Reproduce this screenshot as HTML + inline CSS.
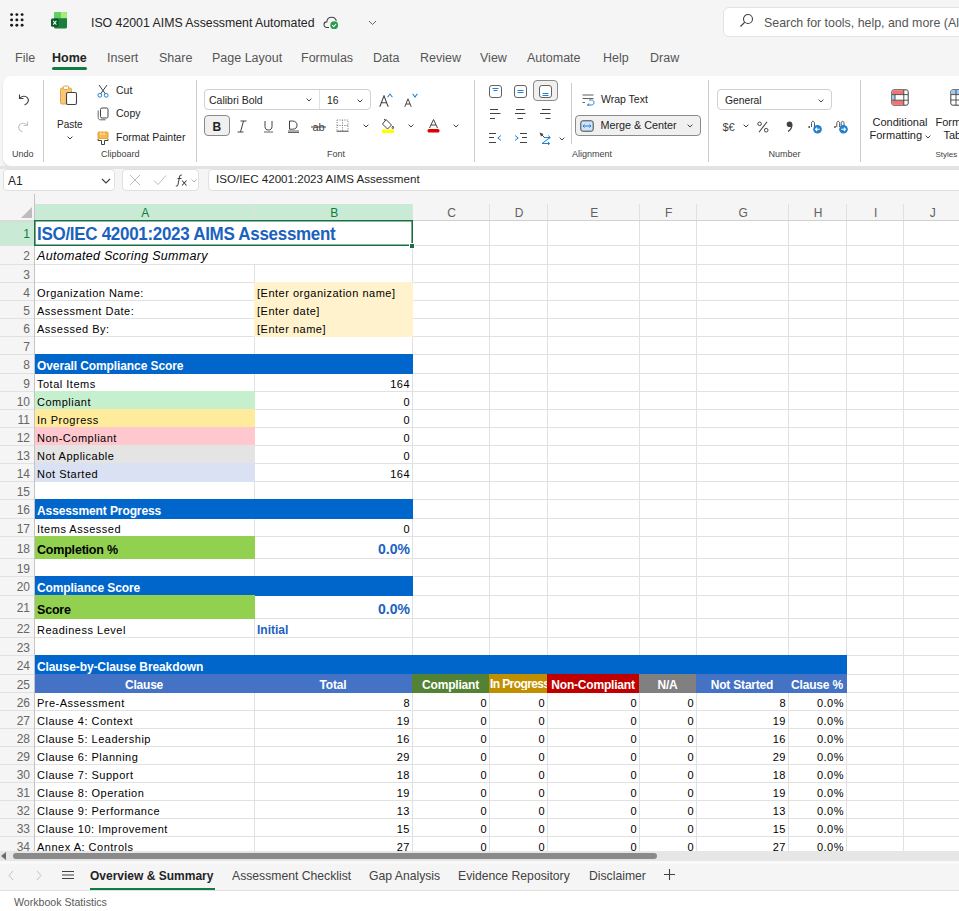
<!DOCTYPE html><html><head><meta charset="utf-8"><style>
*{box-sizing:border-box;margin:0;padding:0}
body{width:959px;height:911px;overflow:hidden;position:relative;background:#f5f5f5;font-family:"Liberation Sans",sans-serif;color:#242424}
.a{position:absolute;white-space:nowrap}
.tab{position:absolute;top:51px;font-size:12.5px;color:#555}
.c{position:absolute;white-space:nowrap;overflow:hidden;font-size:12px;color:#000;line-height:1}
.rh{position:absolute;left:0;width:33px;text-align:right;font-size:12px;color:#616161;padding-right:3px}
.ch{position:absolute;top:205px;height:16px;text-align:center;font-size:12px;color:#616161;line-height:16px;padding-left:2.4px}

</style></head><body>
<div class="a" style="left:0;top:0;width:959px;height:44px;background:#f5f5f5"></div>
<svg class="a" style="left:10.4px;top:13.2px" width="14" height="14" viewBox="0 0 14 14"><circle cx="1.60" cy="1.60" r="1.45" fill="#1a1a1a"/><circle cx="6.85" cy="1.60" r="1.45" fill="#1a1a1a"/><circle cx="12.10" cy="1.60" r="1.45" fill="#1a1a1a"/><circle cx="1.60" cy="6.90" r="1.45" fill="#1a1a1a"/><circle cx="6.85" cy="6.90" r="1.45" fill="#1a1a1a"/><circle cx="12.10" cy="6.90" r="1.45" fill="#1a1a1a"/><circle cx="1.60" cy="12.20" r="1.45" fill="#1a1a1a"/><circle cx="6.85" cy="12.20" r="1.45" fill="#1a1a1a"/><circle cx="12.10" cy="12.20" r="1.45" fill="#1a1a1a"/></svg>
<svg class="a" style="left:51px;top:12px" width="17" height="17" viewBox="0 0 17 17">
<rect x="3" y="0" width="13" height="16.6" rx="1.6" fill="#1b7f3a"/>
<path d="M4.6 0 H9.5 V6.3 H3 V1.6 A1.6 1.6 0 0 1 4.6 0 Z" fill="#62cf62"/>
<path d="M9.5 0 H14.4 A1.6 1.6 0 0 1 16 1.6 V6.3 H9.5 Z" fill="#a6ec7c"/>
<rect x="0" y="6.6" width="7.6" height="8.2" rx="1.3" fill="#0c5a2c"/>
<path d="M2.2 8.8 L5.4 12.6 M5.4 8.8 L2.2 12.6" stroke="#e8fff0" stroke-width="1.1"/>
</svg>
<div class="a" style="left:91px;top:15.5px;font-size:12.3px;color:#242424">ISO 42001 AIMS Assessment Automated</div>
<svg class="a" style="left:323px;top:14px" width="17" height="16" viewBox="0 0 17 16">
<path d="M6 13.5 H4 C2.2 13.5 1 12.3 1 10.7 C1 9.1 2.3 7.9 3.8 7.9 C4.1 5.2 6 3.3 8.6 3.3 C11.2 3.3 13.1 5.2 13.4 7.6" fill="none" stroke="#424242" stroke-width="1.05"/>
<circle cx="11.2" cy="11.2" r="4.6" fill="#fff"/>
<circle cx="11.2" cy="11.2" r="3.9" fill="#2a9d4a"/>
<path d="M9.3 11.2 L10.7 12.6 L13.1 10" fill="none" stroke="#fff" stroke-width="1.1"/>
</svg>
<svg class="a" style="left:368px;top:20px" width="9" height="6" viewBox="0 0 9 6"><path d="M1 1 L4.5 4.5 L8 1" fill="none" stroke="#616161" stroke-width="1"/></svg>
<div class="a" style="left:723px;top:7px;width:260px;height:30px;border-radius:6px;background:#fff;border:1px solid #e3e3e3"></div>
<svg class="a" style="left:739px;top:13px" width="15" height="15" viewBox="0 0 15 15"><circle cx="9" cy="6" r="4.5" fill="none" stroke="#424242" stroke-width="1.1"/><path d="M5.8 9.2 L1.5 13.5" stroke="#424242" stroke-width="1.2"/></svg>
<div class="a" style="left:764px;top:15.5px;font-size:12.4px;color:#555">Search for tools, help, and more (Alt + Q)</div>
<div class="tab" style="left:15px">File</div>
<div class="tab" style="left:52px;font-weight:bold;color:#242424;font-size:12.5px">Home</div>
<div class="tab" style="left:107px">Insert</div>
<div class="tab" style="left:159px">Share</div>
<div class="tab" style="left:212px">Page Layout</div>
<div class="tab" style="left:301px">Formulas</div>
<div class="tab" style="left:373px">Data</div>
<div class="tab" style="left:420px">Review</div>
<div class="tab" style="left:480px">View</div>
<div class="tab" style="left:527px">Automate</div>
<div class="tab" style="left:603px">Help</div>
<div class="tab" style="left:650px">Draw</div>
<div class="a" style="left:52px;top:67px;width:35px;height:3px;border-radius:2px;background:#107c41"></div>
<div class="a" style="left:3px;top:76px;width:1000px;height:90px;background:#fff;border-radius:8px;box-shadow:0 1px 2px rgba(0,0,0,0.14)"></div>
<svg class="a" style="left:17px;top:93px" width="13" height="13" viewBox="0 0 13 13"><path d="M2.5 1.5 V5.5 H6.5" fill="none" stroke="#424242" stroke-width="1.1"/><path d="M2.8 5.3 C4.5 3 8.5 2.5 10.5 4.8 C12.5 7.2 11 10.5 7.5 12" fill="none" stroke="#424242" stroke-width="1.1"/></svg>
<svg class="a" style="left:17px;top:120px" width="13" height="13" viewBox="0 0 13 13"><path d="M10.5 1.5 V5.5 H6.5" fill="none" stroke="#c4c4c4" stroke-width="1.1"/><path d="M10.2 5.3 C8.5 3 4.5 2.5 2.5 4.8 C0.5 7.2 2 10.5 5.5 12" fill="none" stroke="#c4c4c4" stroke-width="1.1"/></svg>
<div class="a" style="left:12px;top:150.38px;font-size:9px;line-height:1;color:#424242">Undo</div>
<div class="a" style="left:43px;top:80px;width:1px;height:82px;background:#cdcdcd"></div>
<svg class="a" style="left:59px;top:85px" width="20" height="21" viewBox="0 0 20 21"><rect x="1.5" y="3" width="11" height="16" rx="1.5" fill="#f8c77a" stroke="#e3a33f" stroke-width="1"/><rect x="4.5" y="1" width="5" height="3.5" rx="1" fill="#fff" stroke="#e3a33f" stroke-width="1"/><rect x="7.5" y="7.5" width="10" height="12" rx="1.5" fill="#fff" stroke="#424242" stroke-width="1.1"/></svg>
<div class="a" style="left:57px;top:119.53px;font-size:10px;line-height:1;color:#242424">Paste</div>
<svg class="a" style="left:66.5px;top:136px" width="6" height="4" viewBox="0 0 6 4"><path d="M0.6 0.6 L3 3 L5.4 0.6" fill="none" stroke="#424242" stroke-width="1"/></svg>
<svg class="a" style="left:97px;top:84px" width="12" height="14" viewBox="0 0 12 14"><path d="M2 1 L8.5 10 M10 1 L3.5 10" stroke="#424242" stroke-width="1"/><circle cx="2.8" cy="11.3" r="1.9" fill="none" stroke="#1f7fd0" stroke-width="1"/><circle cx="9.2" cy="11.3" r="1.9" fill="none" stroke="#1f7fd0" stroke-width="1"/></svg>
<div class="a" style="left:116px;top:85.11px;font-size:10.5px;line-height:1;color:#242424">Cut</div>
<svg class="a" style="left:97px;top:107px" width="12" height="14" viewBox="0 0 12 14"><rect x="3.5" y="1" width="7.5" height="10" rx="1.5" fill="#fff" stroke="#424242" stroke-width="1"/><path d="M1.2 3.5 V10.5 C1.2 12 2 12.8 3.5 12.8 H8.5" fill="none" stroke="#616161" stroke-width="1"/></svg>
<div class="a" style="left:116px;top:108.11px;font-size:10.5px;line-height:1;color:#242424">Copy</div>
<svg class="a" style="left:97px;top:131px" width="12" height="15" viewBox="0 0 12 15"><rect x="1" y="1" width="10" height="7" rx="1" fill="#f8b84e" stroke="#e09020" stroke-width="0.8"/><path d="M4 1.5 V4 M7 1.5 V4" stroke="#fff" stroke-width="0.9"/><path d="M1 8 V9.5 H4.5 V13.5 H7.5 V9.5 H11 V8" fill="#fff" stroke="#424242" stroke-width="1"/></svg>
<div class="a" style="left:116px;top:132.11px;font-size:10.5px;line-height:1;color:#242424">Format Painter</div>
<div class="a" style="left:101px;top:150.38px;font-size:9px;line-height:1;color:#424242">Clipboard</div>
<div class="a" style="left:196px;top:80px;width:1px;height:82px;background:#cdcdcd"></div>
<div class="a" style="left:204px;top:89px;width:167px;height:21px;border:1px solid #d1d1d1;border-radius:4px;background:#fff"></div>
<div class="a" style="left:319px;top:90px;width:1px;height:19px;background:#e0e0e0"></div>
<div class="a" style="left:209px;top:95.11px;font-size:10.5px;line-height:1;color:#242424">Calibri Bold</div>
<svg class="a" style="left:305.5px;top:98px" width="6" height="4" viewBox="0 0 6 4"><path d="M0.6 0.6 L3 3 L5.4 0.6" fill="none" stroke="#424242" stroke-width="1"/></svg>
<div class="a" style="left:327px;top:96.28px;font-size:10.3px;line-height:1;color:#242424">16</div>
<svg class="a" style="left:357px;top:98.5px" width="6" height="4" viewBox="0 0 6 4"><path d="M0.6 0.6 L3 3 L5.4 0.6" fill="none" stroke="#424242" stroke-width="1"/></svg>
<svg class="a" style="left:378.5px;top:95px" width="10" height="12" viewBox="0 0 10 12"><path d="M0.8 11.8 L5 0.8 L9.2 11.8 M2.4 7.8 H7.6" fill="none" stroke="#424242" stroke-width="1.05"/></svg>
<svg class="a" style="left:386.5px;top:93px" width="6" height="5" viewBox="0 0 6 5"><path d="M0.6 4.2 L3 1 L5.4 4.2" fill="none" stroke="#1f7fd0" stroke-width="1.05"/></svg>
<svg class="a" style="left:403.5px;top:98px" width="8" height="9" viewBox="0 0 8 9"><path d="M0.8 8.8 L4 0.8 L7.2 8.8 M2 6 H6" fill="none" stroke="#424242" stroke-width="1"/></svg>
<svg class="a" style="left:411.5px;top:93px" width="6" height="5" viewBox="0 0 6 5"><path d="M0.6 0.8 L3 4 L5.4 0.8" fill="none" stroke="#1f7fd0" stroke-width="1.05"/></svg>
<div class="a" style="left:204px;top:115px;width:26px;height:21px;border:1px solid #8a8a8a;border-radius:4px;background:#f0f0f0"></div>
<div class="a" style="left:212.5px;top:120.84px;font-size:12px;line-height:1;font-weight:bold;color:#242424">B</div>
<svg class="a" style="left:237px;top:120px" width="10" height="13" viewBox="0 0 10 13"><path d="M3.5 1 H9.5 M0.5 12 H6.5 M6.5 1 L3.5 12" fill="none" stroke="#424242" stroke-width="1"/></svg>
<svg class="a" style="left:264px;top:120px" width="9" height="13" viewBox="0 0 9 13"><path d="M1 1 V6.5 C1 9 2.5 10 4.5 10 C6.5 10 8 9 8 6.5 V1" fill="none" stroke="#424242" stroke-width="1"/><path d="M0 12 H9" stroke="#616161" stroke-width="1"/></svg>
<svg class="a" style="left:288px;top:120px" width="11" height="13" viewBox="0 0 11 13"><path d="M1.5 1 H4.5 C7.5 1 9 2.8 9 5.2 C9 7.8 7.5 9.2 4.5 9.2 H1.5 Z" fill="none" stroke="#424242" stroke-width="1"/><path d="M0 11 H11 M0 12.5 H11" stroke="#616161" stroke-width="1"/></svg>
<svg class="a" style="left:311px;top:119px" width="15" height="14" viewBox="0 0 15 14"><text x="7.5" y="12" font-size="11" font-family="Liberation Sans" fill="#424242" text-anchor="middle">ab</text><path d="M0 8 H15" stroke="#424242" stroke-width="1"/></svg>
<svg class="a" style="left:336px;top:119px" width="13" height="13" viewBox="0 0 13 13"><rect x="1" y="1" width="11" height="11" fill="none" stroke="#8a8a8a" stroke-width="1" stroke-dasharray="1.2 1.2"/><path d="M6.5 1 V12 M1 6.5 H12" stroke="#8a8a8a" stroke-width="1" stroke-dasharray="1.2 1.2"/><path d="M0.5 12.3 H12.5" stroke="#616161" stroke-width="1"/></svg>
<svg class="a" style="left:362.5px;top:124px" width="6" height="4" viewBox="0 0 6 4"><path d="M0.6 0.6 L3 3 L5.4 0.6" fill="none" stroke="#424242" stroke-width="1"/></svg>
<svg class="a" style="left:381px;top:118px" width="14" height="15" viewBox="0 0 14 15"><path d="M5 1.5 L10.5 7 L6.5 11 L1.5 6 Z" fill="none" stroke="#424242" stroke-width="1"/><path d="M3 1 L5 3" stroke="#424242" stroke-width="1"/><path d="M11.8 8 C12.8 9.5 12.8 10.5 11.8 10.8 C10.8 10.5 10.8 9.5 11.8 8Z" fill="none" stroke="#424242" stroke-width="0.9"/><rect x="1" y="11.5" width="12" height="3.5" fill="#ffff00"/></svg>
<svg class="a" style="left:407.5px;top:124px" width="6" height="4" viewBox="0 0 6 4"><path d="M0.6 0.6 L3 3 L5.4 0.6" fill="none" stroke="#424242" stroke-width="1"/></svg>
<svg class="a" style="left:427px;top:118px" width="13" height="15" viewBox="0 0 13 15"><path d="M2.5 10 L6.5 1.5 L10.5 10 M4 7 H9" fill="none" stroke="#424242" stroke-width="1"/><rect x="0.5" y="11" width="12" height="3.5" rx="1.5" fill="#e00000"/></svg>
<svg class="a" style="left:452.5px;top:124px" width="6" height="4" viewBox="0 0 6 4"><path d="M0.6 0.6 L3 3 L5.4 0.6" fill="none" stroke="#424242" stroke-width="1"/></svg>
<div class="a" style="left:327px;top:150.38px;font-size:9px;line-height:1;color:#424242">Font</div>
<div class="a" style="left:474px;top:80px;width:1px;height:82px;background:#cdcdcd"></div>
<div class="a" style="left:533px;top:80px;width:25px;height:21px;border:1px solid #8a8a8a;border-radius:4px;background:#f0f0f0"></div>
<svg class="a" style="left:489px;top:85px" width="13" height="13" viewBox="0 0 13 13"><rect x="0.5" y="0.5" width="12" height="12" rx="2.5" fill="#fff" stroke="#616161" stroke-width="1"/><path d="M3.5 3.5 H9.5 M4.5 5.5 H8.5" stroke="#1f7fd0" stroke-width="1"/></svg>
<svg class="a" style="left:514px;top:85px" width="13" height="13" viewBox="0 0 13 13"><rect x="0.5" y="0.5" width="12" height="12" rx="2.5" fill="#fff" stroke="#616161" stroke-width="1"/><path d="M3.5 5.5 H9.5 M3.5 7.5 H9.5" stroke="#1f7fd0" stroke-width="1"/></svg>
<svg class="a" style="left:539px;top:85px" width="13" height="13" viewBox="0 0 13 13"><rect x="0.5" y="0.5" width="12" height="12" rx="2.5" fill="#fff" stroke="#616161" stroke-width="1"/><path d="M3.5 8.5 H9.5 M3.5 10.5 H9.5" stroke="#1f7fd0" stroke-width="1"/></svg>
<svg class="a" style="left:490px;top:109px" width="11" height="10" viewBox="0 0 11 10"><path d="M0 0.5 H8 M0 4.5 H10.5 M0 9.5 H5" stroke="#424242" stroke-width="1"/></svg>
<svg class="a" style="left:515px;top:109px" width="11" height="10" viewBox="0 0 11 10"><path d="M1 0.5 H9.5 M0 4.5 H10.5 M2.5 9.5 H8" stroke="#424242" stroke-width="1"/></svg>
<svg class="a" style="left:540px;top:109px" width="11" height="10" viewBox="0 0 11 10"><path d="M2 0.5 H10.5 M0 4.5 H10.5 M5.5 9.5 H10.5" stroke="#424242" stroke-width="1"/></svg>
<svg class="a" style="left:489px;top:133px" width="13" height="10" viewBox="0 0 13 10"><path d="M0 0.5 H7 M0 4.5 H5 M0 9.5 H7" stroke="#424242" stroke-width="1"/><path d="M12 2.5 L8.8 5 L12 7.5" fill="none" stroke="#1f7fd0" stroke-width="1"/></svg>
<svg class="a" style="left:514px;top:133px" width="13" height="10" viewBox="0 0 13 10"><path d="M6 0.5 H13 M8 4.5 H13 M6 9.5 H13" stroke="#424242" stroke-width="1"/><path d="M1 2.5 L4.2 5 L1 7.5" fill="none" stroke="#1f7fd0" stroke-width="1"/></svg>
<svg class="a" style="left:539px;top:132px" width="13" height="13" viewBox="0 0 13 13"><path d="M0.5 0.5 L4.5 2 L2 4.5 Z" fill="#424242"/><path d="M3 3 L5 5" stroke="#424242" stroke-width="1"/><path d="M5 5.5 H11 L3 11.5 H10.5" fill="none" stroke="#1f7fd0" stroke-width="1"/><path d="M9.5 3.5 L11 5.5 L9.5 7 M9 10 L10.7 11.5 L9 13" fill="none" stroke="#1f7fd0" stroke-width="1"/></svg>
<svg class="a" style="left:558.5px;top:136.5px" width="6" height="4" viewBox="0 0 6 4"><path d="M0.6 0.6 L3 3 L5.4 0.6" fill="none" stroke="#424242" stroke-width="1"/></svg>
<div class="a" style="left:571px;top:83px;width:1px;height:61px;background:#cdcdcd"></div>
<svg class="a" style="left:582px;top:94px" width="13" height="12" viewBox="0 0 13 12"><path d="M0.5 1 H11.5 M0.5 4.5 H11.5 M0.5 8.5 H3" stroke="#616161" stroke-width="1"/><path d="M5.5 11 H9.5 C11 11 12 10 12 8.5 C12 7 11 6 9.5 6 H7" fill="none" stroke="#1f7fd0" stroke-width="1"/><path d="M7.2 9.5 L5.5 11 L7.2 12.5" fill="none" stroke="#1f7fd0" stroke-width="1"/></svg>
<div class="a" style="left:601px;top:94.31px;font-size:10.5px;line-height:1;color:#242424">Wrap Text</div>
<div class="a" style="left:575px;top:115px;width:126px;height:21px;border:1px solid #8a8a8a;border-radius:4px;background:#f0f0f0"></div>
<svg class="a" style="left:580px;top:120px" width="14" height="12" viewBox="0 0 14 12"><rect x="0.8" y="0.8" width="12.4" height="10.4" rx="2" fill="#cfe4fa" stroke="#424242" stroke-width="1"/><path d="M3 6 H11 M4.5 4.5 L3 6 L4.5 7.5 M9.5 4.5 L11 6 L9.5 7.5" fill="none" stroke="#1f7fd0" stroke-width="1"/></svg>
<div class="a" style="left:600.5px;top:119.86px;font-size:10.8px;line-height:1;color:#242424">Merge &amp; Center</div>
<svg class="a" style="left:686.5px;top:124px" width="6" height="4" viewBox="0 0 6 4"><path d="M0.6 0.6 L3 3 L5.4 0.6" fill="none" stroke="#424242" stroke-width="1"/></svg>
<div class="a" style="left:572px;top:150.38px;font-size:9px;line-height:1;color:#424242">Alignment</div>
<div class="a" style="left:708px;top:80px;width:1px;height:82px;background:#cdcdcd"></div>
<div class="a" style="left:717px;top:89px;width:115px;height:21px;border:1px solid #d1d1d1;border-radius:4px;background:#fff"></div>
<div class="a" style="left:725px;top:96.28px;font-size:10.3px;line-height:1;color:#242424">General</div>
<svg class="a" style="left:817.5px;top:98.5px" width="6" height="4" viewBox="0 0 6 4"><path d="M0.6 0.6 L3 3 L5.4 0.6" fill="none" stroke="#424242" stroke-width="1"/></svg>
<div class="a" style="left:722.5px;top:121.69px;font-size:11px;line-height:1;color:#424242">$€</div>
<svg class="a" style="left:742.5px;top:124px" width="6" height="4" viewBox="0 0 6 4"><path d="M0.6 0.6 L3 3 L5.4 0.6" fill="none" stroke="#424242" stroke-width="1"/></svg>
<svg class="a" style="left:757px;top:120.5px" width="12" height="12" viewBox="0 0 12 12"><circle cx="2.6" cy="2.8" r="1.8" fill="none" stroke="#424242" stroke-width="1"/><circle cx="9.2" cy="9.2" r="1.8" fill="none" stroke="#424242" stroke-width="1"/><path d="M10 0.8 L2 11.2" stroke="#424242" stroke-width="1.05"/></svg>
<svg class="a" style="left:786px;top:121px" width="7" height="11" viewBox="0 0 7 11"><circle cx="3.5" cy="3.3" r="2.8" fill="#424242"/><path d="M5.9 3.5 C5.9 7 4.5 9 2 10.5" fill="none" stroke="#424242" stroke-width="1.3"/></svg>
<svg class="a" style="left:808px;top:120px" width="14" height="14" viewBox="0 0 14 14"><circle cx="1.2" cy="7" r="0.9" fill="#424242"/><path d="M3.5 7 V3.3 C3.5 2 4.2 1.3 5 1.3 C5.8 1.3 6.5 2 6.5 3.3 V7" fill="none" stroke="#424242" stroke-width="0.9"/><circle cx="9.5" cy="9.3" r="4.3" fill="#1f7fd0"/><path d="M11.8 9.3 H7.5 M9.2 7.6 L7.5 9.3 L9.2 11" fill="none" stroke="#fff" stroke-width="1.1"/></svg>
<svg class="a" style="left:834px;top:120px" width="14" height="14" viewBox="0 0 14 14"><circle cx="1" cy="7" r="0.9" fill="#424242"/><path d="M2.8 7 V3.3 C2.8 2 3.4 1.3 4.2 1.3 C5 1.3 5.6 2 5.6 3.3 V7 M7.2 6 V3.3 C7.2 2 7.8 1.3 8.6 1.3 C9.4 1.3 10 2 10 3.3 V6" fill="none" stroke="#424242" stroke-width="0.9"/><circle cx="9.5" cy="9.3" r="4.3" fill="#1f7fd0"/><path d="M7.2 9.3 H11.5 M9.8 7.6 L11.5 9.3 L9.8 11" fill="none" stroke="#fff" stroke-width="1.1"/></svg>
<div class="a" style="left:768.5px;top:150.38px;font-size:9px;line-height:1;color:#424242">Number</div>
<div class="a" style="left:860px;top:80px;width:1px;height:82px;background:#cdcdcd"></div>
<svg class="a" style="left:891px;top:89px" width="18" height="17" viewBox="0 0 18 17"><rect x="0.8" y="0.8" width="16.4" height="15.4" rx="2" fill="#fff" stroke="#424242" stroke-width="1"/><rect x="1.3" y="1.3" width="11.5" height="4" fill="#f87171"/><rect x="1.3" y="11.5" width="11.5" height="4.3" fill="#f87171"/><rect x="1.3" y="6" width="2.5" height="5" fill="#9ccaf5"/><path d="M1 5.6 H17 M1 11.2 H17 M12.8 1 V16 M4 5.6 V11.2" stroke="#424242" stroke-width="0.9"/></svg>
<div class="a" style="left:872.5px;top:116.69px;font-size:11px;line-height:1;color:#242424">Conditional</div>
<div class="a" style="left:869.5px;top:130.19px;font-size:11px;line-height:1;color:#242424">Formatting</div>
<svg class="a" style="left:924.5px;top:134.5px" width="6" height="4" viewBox="0 0 6 4"><path d="M0.6 0.6 L3 3 L5.4 0.6" fill="none" stroke="#424242" stroke-width="1"/></svg>
<svg class="a" style="left:950px;top:89px" width="18" height="17" viewBox="0 0 18 17"><rect x="0.8" y="0.8" width="16.4" height="15.4" rx="2" fill="#fff" stroke="#424242" stroke-width="1"/><rect x="1.3" y="1.3" width="15.4" height="4" fill="#9ccaf5"/><path d="M1 5.6 H17 M1 11 H17 M6 1 V16" stroke="#424242" stroke-width="0.9"/></svg>
<div class="a" style="left:935.5px;top:116.69px;font-size:11px;line-height:1;color:#242424">Formatting</div>
<div class="a" style="left:943.5px;top:130.19px;font-size:11px;line-height:1;color:#242424">Table</div>
<div class="a" style="left:935.5px;top:151.23px;font-size:8px;line-height:1;color:#424242">Styles</div>
<div class="a" style="left:0;top:166px;width:959px;height:3px;background:#e3e3e3"></div>
<div class="a" style="left:3px;top:169px;width:112px;height:22px;background:#fff;border:1px solid #e0e0e0;border-radius:4px"></div>
<div class="a" style="left:8px;top:174px;font-size:12px;color:#242424">A1</div>
<svg class="a" style="left:101px;top:178px" width="10" height="6" viewBox="0 0 10 6"><path d="M1 1 L5 5 L9 1" fill="none" stroke="#424242" stroke-width="1.2"/></svg>
<div class="a" style="left:122px;top:169px;width:77px;height:22px;background:#fff;border:1px solid #e0e0e0;border-radius:4px"></div>
<svg class="a" style="left:129px;top:174px" width="12" height="12" viewBox="0 0 12 12"><path d="M1 1 L11 11 M11 1 L1 11" stroke="#bdbdbd" stroke-width="1"/></svg>
<svg class="a" style="left:153px;top:174px" width="14" height="12" viewBox="0 0 14 12"><path d="M1 6.5 L5 10.5 L13 1.5" fill="none" stroke="#bdbdbd" stroke-width="1"/></svg>
<svg class="a" style="left:175px;top:174px" width="13" height="13" viewBox="0 0 13 13"><path d="M6.8 1.2 C5.6 0.8 4.8 1.4 4.5 2.8 L3 10.5 C2.7 11.8 2 12.3 0.8 12" fill="none" stroke="#424242" stroke-width="1.05"/><path d="M2.5 4.5 H6.5" stroke="#424242" stroke-width="1"/><path d="M7 6.5 L11.5 11.5 M11.5 6.5 L7 11.5" stroke="#424242" stroke-width="1.05"/></svg>
<svg class="a" style="left:191px;top:179px" width="6" height="4" viewBox="0 0 6 4"><path d="M0.5 0.5 L3 3 L5.5 0.5" fill="none" stroke="#9e9e9e" stroke-width="0.8"/></svg>
<div class="a" style="left:208px;top:169px;width:800px;height:22px;background:#fff;border:1px solid #e0e0e0;border-radius:4px"></div>
<div class="a" style="left:216px;top:171.5px;font-size:11.6px;color:#242424">ISO/IEC 42001:2023 AIMS Assessment</div>
<div class="a" style="left:0;top:194px;width:959px;height:657px;background:#fff"></div>
<div class="a" style="left:0;top:220px;width:959px;height:1px;background:#e1e1e1"></div>
<div class="a" style="left:0;top:245px;width:959px;height:1px;background:#e1e1e1"></div>
<div class="a" style="left:0;top:264px;width:959px;height:1px;background:#e1e1e1"></div>
<div class="a" style="left:0;top:282px;width:959px;height:1px;background:#e1e1e1"></div>
<div class="a" style="left:0;top:300px;width:959px;height:1px;background:#e1e1e1"></div>
<div class="a" style="left:0;top:318px;width:959px;height:1px;background:#e1e1e1"></div>
<div class="a" style="left:0;top:336px;width:959px;height:1px;background:#e1e1e1"></div>
<div class="a" style="left:0;top:354px;width:959px;height:1px;background:#e1e1e1"></div>
<div class="a" style="left:0;top:373px;width:959px;height:1px;background:#e1e1e1"></div>
<div class="a" style="left:0;top:391px;width:959px;height:1px;background:#e1e1e1"></div>
<div class="a" style="left:0;top:409px;width:959px;height:1px;background:#e1e1e1"></div>
<div class="a" style="left:0;top:427px;width:959px;height:1px;background:#e1e1e1"></div>
<div class="a" style="left:0;top:445px;width:959px;height:1px;background:#e1e1e1"></div>
<div class="a" style="left:0;top:463px;width:959px;height:1px;background:#e1e1e1"></div>
<div class="a" style="left:0;top:481px;width:959px;height:1px;background:#e1e1e1"></div>
<div class="a" style="left:0;top:499px;width:959px;height:1px;background:#e1e1e1"></div>
<div class="a" style="left:0;top:518px;width:959px;height:1px;background:#e1e1e1"></div>
<div class="a" style="left:0;top:536px;width:959px;height:1px;background:#e1e1e1"></div>
<div class="a" style="left:0;top:558px;width:959px;height:1px;background:#e1e1e1"></div>
<div class="a" style="left:0;top:576px;width:959px;height:1px;background:#e1e1e1"></div>
<div class="a" style="left:0;top:595px;width:959px;height:1px;background:#e1e1e1"></div>
<div class="a" style="left:0;top:618px;width:959px;height:1px;background:#e1e1e1"></div>
<div class="a" style="left:0;top:637px;width:959px;height:1px;background:#e1e1e1"></div>
<div class="a" style="left:0;top:655px;width:959px;height:1px;background:#e1e1e1"></div>
<div class="a" style="left:0;top:674px;width:959px;height:1px;background:#e1e1e1"></div>
<div class="a" style="left:0;top:692px;width:959px;height:1px;background:#e1e1e1"></div>
<div class="a" style="left:0;top:710px;width:959px;height:1px;background:#e1e1e1"></div>
<div class="a" style="left:0;top:728px;width:959px;height:1px;background:#e1e1e1"></div>
<div class="a" style="left:0;top:746px;width:959px;height:1px;background:#e1e1e1"></div>
<div class="a" style="left:0;top:764px;width:959px;height:1px;background:#e1e1e1"></div>
<div class="a" style="left:0;top:782px;width:959px;height:1px;background:#e1e1e1"></div>
<div class="a" style="left:0;top:800px;width:959px;height:1px;background:#e1e1e1"></div>
<div class="a" style="left:0;top:818px;width:959px;height:1px;background:#e1e1e1"></div>
<div class="a" style="left:0;top:836px;width:959px;height:1px;background:#e1e1e1"></div>
<div class="a" style="left:0;top:854px;width:959px;height:1px;background:#e1e1e1"></div>
<div class="a" style="left:254px;top:264px;width:1px;height:587px;background:#e1e1e1"></div>
<div class="a" style="left:412px;top:204px;width:1px;height:647px;background:#e1e1e1"></div>
<div class="a" style="left:489px;top:204px;width:1px;height:647px;background:#e1e1e1"></div>
<div class="a" style="left:547px;top:204px;width:1px;height:647px;background:#e1e1e1"></div>
<div class="a" style="left:639px;top:204px;width:1px;height:647px;background:#e1e1e1"></div>
<div class="a" style="left:696px;top:204px;width:1px;height:647px;background:#e1e1e1"></div>
<div class="a" style="left:788px;top:204px;width:1px;height:647px;background:#e1e1e1"></div>
<div class="a" style="left:846px;top:204px;width:1px;height:647px;background:#e1e1e1"></div>
<div class="a" style="left:903px;top:204px;width:1px;height:647px;background:#e1e1e1"></div>
<div class="a" style="left:960px;top:204px;width:1px;height:647px;background:#e1e1e1"></div>
<div class="a" style="left:254px;top:282px;width:159px;height:19px;background:#fff2cc"></div>
<div class="a" style="left:254px;top:300px;width:159px;height:19px;background:#fff2cc"></div>
<div class="a" style="left:254px;top:318px;width:159px;height:19px;background:#fff2cc"></div>
<div class="a" style="left:34px;top:354px;width:379px;height:20px;background:#0066cc"></div>
<div class="a" style="left:34px;top:391px;width:221px;height:19px;background:#c6efce"></div>
<div class="a" style="left:34px;top:409px;width:221px;height:19px;background:#ffeb9c"></div>
<div class="a" style="left:34px;top:427px;width:221px;height:19px;background:#ffc7ce"></div>
<div class="a" style="left:34px;top:445px;width:221px;height:19px;background:#e4e4e4"></div>
<div class="a" style="left:34px;top:463px;width:221px;height:19px;background:#d9e1f2"></div>
<div class="a" style="left:34px;top:499px;width:379px;height:20px;background:#0066cc"></div>
<div class="a" style="left:34px;top:536px;width:221px;height:23px;background:#92d050"></div>
<div class="a" style="left:34px;top:576px;width:379px;height:20px;background:#0066cc"></div>
<div class="a" style="left:34px;top:595px;width:221px;height:24px;background:#92d050"></div>
<div class="a" style="left:34px;top:655px;width:813px;height:20px;background:#0066cc"></div>
<div class="a" style="left:34px;top:674px;width:379px;height:19px;background:#4472c4"></div>
<div class="a" style="left:412px;top:674px;width:78px;height:19px;background:#548235"></div>
<div class="a" style="left:489px;top:674px;width:59px;height:19px;background:#bf8f00"></div>
<div class="a" style="left:547px;top:674px;width:93px;height:19px;background:#c00000"></div>
<div class="a" style="left:639px;top:674px;width:58px;height:19px;background:#808080"></div>
<div class="a" style="left:696px;top:674px;width:151px;height:19px;background:#4472c4"></div>
<div class="a" style="left:0;top:191px;width:959px;height:13px;background:#f5f5f5"></div>
<div class="a" style="left:0;top:204px;width:959px;height:16px;background:#f5f5f5"></div>
<div class="a" style="left:0;top:220px;width:34px;height:631px;background:#f5f5f5"></div>
<div class="a" style="left:34px;top:204px;width:378px;height:16px;background:#c9ebd6"></div>
<div class="a" style="left:0;top:222px;width:34px;height:23px;background:#c9ebd6"></div>
<div class="a" style="left:0;top:245px;width:34px;height:1px;background:#e1e1e1"></div>
<div class="a" style="left:0;top:264px;width:34px;height:1px;background:#e1e1e1"></div>
<div class="a" style="left:0;top:282px;width:34px;height:1px;background:#e1e1e1"></div>
<div class="a" style="left:0;top:300px;width:34px;height:1px;background:#e1e1e1"></div>
<div class="a" style="left:0;top:318px;width:34px;height:1px;background:#e1e1e1"></div>
<div class="a" style="left:0;top:336px;width:34px;height:1px;background:#e1e1e1"></div>
<div class="a" style="left:0;top:354px;width:34px;height:1px;background:#e1e1e1"></div>
<div class="a" style="left:0;top:373px;width:34px;height:1px;background:#e1e1e1"></div>
<div class="a" style="left:0;top:391px;width:34px;height:1px;background:#e1e1e1"></div>
<div class="a" style="left:0;top:409px;width:34px;height:1px;background:#e1e1e1"></div>
<div class="a" style="left:0;top:427px;width:34px;height:1px;background:#e1e1e1"></div>
<div class="a" style="left:0;top:445px;width:34px;height:1px;background:#e1e1e1"></div>
<div class="a" style="left:0;top:463px;width:34px;height:1px;background:#e1e1e1"></div>
<div class="a" style="left:0;top:481px;width:34px;height:1px;background:#e1e1e1"></div>
<div class="a" style="left:0;top:499px;width:34px;height:1px;background:#e1e1e1"></div>
<div class="a" style="left:0;top:518px;width:34px;height:1px;background:#e1e1e1"></div>
<div class="a" style="left:0;top:536px;width:34px;height:1px;background:#e1e1e1"></div>
<div class="a" style="left:0;top:558px;width:34px;height:1px;background:#e1e1e1"></div>
<div class="a" style="left:0;top:576px;width:34px;height:1px;background:#e1e1e1"></div>
<div class="a" style="left:0;top:595px;width:34px;height:1px;background:#e1e1e1"></div>
<div class="a" style="left:0;top:618px;width:34px;height:1px;background:#e1e1e1"></div>
<div class="a" style="left:0;top:637px;width:34px;height:1px;background:#e1e1e1"></div>
<div class="a" style="left:0;top:655px;width:34px;height:1px;background:#e1e1e1"></div>
<div class="a" style="left:0;top:674px;width:34px;height:1px;background:#e1e1e1"></div>
<div class="a" style="left:0;top:692px;width:34px;height:1px;background:#e1e1e1"></div>
<div class="a" style="left:0;top:710px;width:34px;height:1px;background:#e1e1e1"></div>
<div class="a" style="left:0;top:728px;width:34px;height:1px;background:#e1e1e1"></div>
<div class="a" style="left:0;top:746px;width:34px;height:1px;background:#e1e1e1"></div>
<div class="a" style="left:0;top:764px;width:34px;height:1px;background:#e1e1e1"></div>
<div class="a" style="left:0;top:782px;width:34px;height:1px;background:#e1e1e1"></div>
<div class="a" style="left:0;top:800px;width:34px;height:1px;background:#e1e1e1"></div>
<div class="a" style="left:0;top:818px;width:34px;height:1px;background:#e1e1e1"></div>
<div class="a" style="left:0;top:836px;width:34px;height:1px;background:#e1e1e1"></div>
<div class="a" style="left:0;top:854px;width:34px;height:1px;background:#e1e1e1"></div>
<div class="a" style="left:254px;top:204px;width:1px;height:16px;background:#e1e1e1"></div>
<div class="a" style="left:412px;top:204px;width:1px;height:16px;background:#e1e1e1"></div>
<div class="a" style="left:489px;top:204px;width:1px;height:16px;background:#e1e1e1"></div>
<div class="a" style="left:547px;top:204px;width:1px;height:16px;background:#e1e1e1"></div>
<div class="a" style="left:639px;top:204px;width:1px;height:16px;background:#e1e1e1"></div>
<div class="a" style="left:696px;top:204px;width:1px;height:16px;background:#e1e1e1"></div>
<div class="a" style="left:788px;top:204px;width:1px;height:16px;background:#e1e1e1"></div>
<div class="a" style="left:846px;top:204px;width:1px;height:16px;background:#e1e1e1"></div>
<div class="a" style="left:903px;top:204px;width:1px;height:16px;background:#e1e1e1"></div>
<div class="a" style="left:960px;top:204px;width:1px;height:16px;background:#e1e1e1"></div>
<div class="a" style="left:34px;top:194px;width:1px;height:657px;background:#c4c4c4"></div>
<div class="a" style="left:0;top:220px;width:34px;height:2px;background:#dadada"></div>
<div class="a" style="left:412px;top:220px;width:547px;height:1px;background:#d0d0d0"></div>
<svg class="a" style="left:21px;top:207px" width="11" height="11" viewBox="0 0 11 11"><path d="M11 0 L11 11 L0 11 Z" fill="#bdbdbd"/></svg>
<div class="ch" style="left:34px;width:220px;color:#107c41">A</div>
<div class="ch" style="left:254px;width:158px;color:#107c41">B</div>
<div class="ch" style="left:412px;width:77px;color:#616161">C</div>
<div class="ch" style="left:489px;width:58px;color:#616161">D</div>
<div class="ch" style="left:547px;width:92px;color:#616161">E</div>
<div class="ch" style="left:639px;width:57px;color:#616161">F</div>
<div class="ch" style="left:696px;width:92px;color:#616161">G</div>
<div class="ch" style="left:788px;width:58px;color:#616161">H</div>
<div class="ch" style="left:846px;width:57px;color:#616161">I</div>
<div class="ch" style="left:903px;width:57px;color:#616161">J</div>
<div class="a" style="left:0;width:30px;text-align:right;top:228.14px;font-size:12px;line-height:1;color:#107c41">1</div>
<div class="a" style="left:0;width:30px;text-align:right;top:250.14px;font-size:12px;line-height:1;color:#666">2</div>
<div class="a" style="left:0;width:30px;text-align:right;top:268.64px;font-size:12px;line-height:1;color:#666">3</div>
<div class="a" style="left:0;width:30px;text-align:right;top:286.64px;font-size:12px;line-height:1;color:#666">4</div>
<div class="a" style="left:0;width:30px;text-align:right;top:304.64px;font-size:12px;line-height:1;color:#666">5</div>
<div class="a" style="left:0;width:30px;text-align:right;top:322.64px;font-size:12px;line-height:1;color:#666">6</div>
<div class="a" style="left:0;width:30px;text-align:right;top:340.64px;font-size:12px;line-height:1;color:#666">7</div>
<div class="a" style="left:0;width:30px;text-align:right;top:359.14px;font-size:12px;line-height:1;color:#666">8</div>
<div class="a" style="left:0;width:30px;text-align:right;top:377.64px;font-size:12px;line-height:1;color:#666">9</div>
<div class="a" style="left:0;width:30px;text-align:right;top:395.64px;font-size:12px;line-height:1;color:#666">10</div>
<div class="a" style="left:0;width:30px;text-align:right;top:413.64px;font-size:12px;line-height:1;color:#666">11</div>
<div class="a" style="left:0;width:30px;text-align:right;top:431.64px;font-size:12px;line-height:1;color:#666">12</div>
<div class="a" style="left:0;width:30px;text-align:right;top:449.64px;font-size:12px;line-height:1;color:#666">13</div>
<div class="a" style="left:0;width:30px;text-align:right;top:467.64px;font-size:12px;line-height:1;color:#666">14</div>
<div class="a" style="left:0;width:30px;text-align:right;top:485.64px;font-size:12px;line-height:1;color:#666">15</div>
<div class="a" style="left:0;width:30px;text-align:right;top:504.14px;font-size:12px;line-height:1;color:#666">16</div>
<div class="a" style="left:0;width:30px;text-align:right;top:522.64px;font-size:12px;line-height:1;color:#666">17</div>
<div class="a" style="left:0;width:30px;text-align:right;top:542.64px;font-size:12px;line-height:1;color:#666">18</div>
<div class="a" style="left:0;width:30px;text-align:right;top:562.64px;font-size:12px;line-height:1;color:#666">19</div>
<div class="a" style="left:0;width:30px;text-align:right;top:581.14px;font-size:12px;line-height:1;color:#666">20</div>
<div class="a" style="left:0;width:30px;text-align:right;top:602.14px;font-size:12px;line-height:1;color:#666">21</div>
<div class="a" style="left:0;width:30px;text-align:right;top:623.14px;font-size:12px;line-height:1;color:#666">22</div>
<div class="a" style="left:0;width:30px;text-align:right;top:641.64px;font-size:12px;line-height:1;color:#666">23</div>
<div class="a" style="left:0;width:30px;text-align:right;top:660.14px;font-size:12px;line-height:1;color:#666">24</div>
<div class="a" style="left:0;width:30px;text-align:right;top:678.64px;font-size:12px;line-height:1;color:#666">25</div>
<div class="a" style="left:0;width:30px;text-align:right;top:696.64px;font-size:12px;line-height:1;color:#666">26</div>
<div class="a" style="left:0;width:30px;text-align:right;top:714.64px;font-size:12px;line-height:1;color:#666">27</div>
<div class="a" style="left:0;width:30px;text-align:right;top:732.64px;font-size:12px;line-height:1;color:#666">28</div>
<div class="a" style="left:0;width:30px;text-align:right;top:750.64px;font-size:12px;line-height:1;color:#666">29</div>
<div class="a" style="left:0;width:30px;text-align:right;top:768.64px;font-size:12px;line-height:1;color:#666">30</div>
<div class="a" style="left:0;width:30px;text-align:right;top:786.64px;font-size:12px;line-height:1;color:#666">31</div>
<div class="a" style="left:0;width:30px;text-align:right;top:804.64px;font-size:12px;line-height:1;color:#666">32</div>
<div class="a" style="left:0;width:30px;text-align:right;top:822.64px;font-size:12px;line-height:1;color:#666">33</div>
<div class="a" style="left:0;width:30px;text-align:right;top:840.64px;font-size:12px;line-height:1;color:#666">34</div>
<div class="a" style="left:37px;top:225.61px;font-size:17px;line-height:1;letter-spacing:-0.3px;color:#000;font-weight:bold;color:#1a62c0;transform:scaleY(1.09);transform-origin:0 85%">ISO/IEC 42001:2023 AIMS Assessment</div>
<div class="a" style="left:37px;top:250.12px;font-size:12.5px;line-height:1;letter-spacing:0.3px;color:#000;font-style:italic">Automated Scoring Summary</div>
<div class="a" style="left:37px;top:287.79px;font-size:11px;line-height:1;letter-spacing:0.5px;color:#000;">Organization Name:</div>
<div class="a" style="left:257px;top:287.79px;font-size:11px;line-height:1;letter-spacing:0.5px;color:#000;">[Enter organization name]</div>
<div class="a" style="left:37px;top:305.79px;font-size:11px;line-height:1;letter-spacing:0.5px;color:#000;">Assessment Date:</div>
<div class="a" style="left:257px;top:305.79px;font-size:11px;line-height:1;letter-spacing:0.5px;color:#000;">[Enter date]</div>
<div class="a" style="left:37px;top:323.79px;font-size:11px;line-height:1;letter-spacing:0.5px;color:#000;">Assessed By:</div>
<div class="a" style="left:257px;top:323.79px;font-size:11px;line-height:1;letter-spacing:0.5px;color:#000;">[Enter name]</div>
<div class="a" style="left:37px;top:359.54px;font-size:12px;line-height:1;letter-spacing:-0.1px;color:#000;font-weight:bold;color:#fff">Overall Compliance Score</div>
<div class="a" style="left:37px;top:378.79px;font-size:11px;line-height:1;letter-spacing:0.5px;color:#000;">Total Items</div>
<div class="a" style="left:254px;width:156px;text-align:right;top:378.79px;font-size:11px;line-height:1;letter-spacing:0.5px;color:#000;">164</div>
<div class="a" style="left:37px;top:396.79px;font-size:11px;line-height:1;letter-spacing:0.5px;color:#000;">Compliant</div>
<div class="a" style="left:254px;width:156px;text-align:right;top:396.79px;font-size:11px;line-height:1;letter-spacing:0.5px;color:#000;">0</div>
<div class="a" style="left:37px;top:414.79px;font-size:11px;line-height:1;letter-spacing:0.5px;color:#000;">In Progress</div>
<div class="a" style="left:254px;width:156px;text-align:right;top:414.79px;font-size:11px;line-height:1;letter-spacing:0.5px;color:#000;">0</div>
<div class="a" style="left:37px;top:432.79px;font-size:11px;line-height:1;letter-spacing:0.5px;color:#000;">Non-Compliant</div>
<div class="a" style="left:254px;width:156px;text-align:right;top:432.79px;font-size:11px;line-height:1;letter-spacing:0.5px;color:#000;">0</div>
<div class="a" style="left:37px;top:450.79px;font-size:11px;line-height:1;letter-spacing:0.5px;color:#000;">Not Applicable</div>
<div class="a" style="left:254px;width:156px;text-align:right;top:450.79px;font-size:11px;line-height:1;letter-spacing:0.5px;color:#000;">0</div>
<div class="a" style="left:37px;top:468.79px;font-size:11px;line-height:1;letter-spacing:0.5px;color:#000;">Not Started</div>
<div class="a" style="left:254px;width:156px;text-align:right;top:468.79px;font-size:11px;line-height:1;letter-spacing:0.5px;color:#000;">164</div>
<div class="a" style="left:37px;top:504.54px;font-size:12px;line-height:1;letter-spacing:-0.1px;color:#000;font-weight:bold;color:#fff">Assessment Progress</div>
<div class="a" style="left:37px;top:523.79px;font-size:11px;line-height:1;letter-spacing:0.5px;color:#000;">Items Assessed</div>
<div class="a" style="left:254px;width:156px;text-align:right;top:523.79px;font-size:11px;line-height:1;letter-spacing:0.5px;color:#000;">0</div>
<div class="a" style="left:37px;top:543.72px;font-size:12.5px;line-height:1;letter-spacing:-0.2px;color:#000;font-weight:bold">Completion %</div>
<div class="a" style="left:254px;width:156px;text-align:right;top:542.45px;font-size:14px;line-height:1;letter-spacing:0px;color:#000;font-weight:bold;color:#1a62c0">0.0%</div>
<div class="a" style="left:37px;top:581.54px;font-size:12px;line-height:1;letter-spacing:-0.1px;color:#000;font-weight:bold;color:#fff">Compliance Score</div>
<div class="a" style="left:37px;top:603.72px;font-size:12.5px;line-height:1;letter-spacing:-0.2px;color:#000;font-weight:bold">Score</div>
<div class="a" style="left:254px;width:156px;text-align:right;top:602.45px;font-size:14px;line-height:1;letter-spacing:0px;color:#000;font-weight:bold;color:#1a62c0">0.0%</div>
<div class="a" style="left:37px;top:624.79px;font-size:11px;line-height:1;letter-spacing:0.5px;color:#000;">Readiness Level</div>
<div class="a" style="left:257px;top:623.94px;font-size:12px;line-height:1;letter-spacing:0px;color:#000;font-weight:bold;color:#1a62c0">Initial</div>
<div class="a" style="left:37px;top:660.54px;font-size:12px;line-height:1;letter-spacing:-0.1px;color:#000;font-weight:bold;color:#fff">Clause-by-Clause Breakdown</div>
<div class="a" style="left:34px;width:220px;text-align:center;top:678.94px;font-size:12px;line-height:1;letter-spacing:-0.2px;color:#000;font-weight:bold;color:#fff">Clause</div>
<div class="a" style="left:254px;width:158px;text-align:center;top:678.94px;font-size:12px;line-height:1;letter-spacing:-0.2px;color:#000;font-weight:bold;color:#fff">Total</div>
<div class="a" style="left:412px;width:77px;text-align:center;top:678.94px;font-size:12px;line-height:1;letter-spacing:-0.2px;color:#000;font-weight:bold;color:#fff">Compliant</div>
<div class="a" style="left:490px;top:678.34px;width:57px;overflow:hidden;font-size:12px;line-height:1;font-weight:bold;color:#fff;letter-spacing:-0.6px">In Progress</div>
<div class="a" style="left:547px;width:92px;text-align:center;top:678.94px;font-size:12px;line-height:1;letter-spacing:-0.2px;color:#000;font-weight:bold;color:#fff">Non-Compliant</div>
<div class="a" style="left:639px;width:57px;text-align:center;top:678.94px;font-size:12px;line-height:1;letter-spacing:-0.2px;color:#000;font-weight:bold;color:#fff">N/A</div>
<div class="a" style="left:696px;width:92px;text-align:center;top:678.94px;font-size:12px;line-height:1;letter-spacing:-0.2px;color:#000;font-weight:bold;color:#fff">Not Started</div>
<div class="a" style="left:788px;width:58px;text-align:center;top:678.94px;font-size:12px;line-height:1;letter-spacing:-0.2px;color:#000;font-weight:bold;color:#fff">Clause %</div>
<div class="a" style="left:37px;top:697.79px;font-size:11px;line-height:1;letter-spacing:0.5px;color:#000;">Pre-Assessment</div>
<div class="a" style="left:254px;width:156px;text-align:right;top:697.79px;font-size:11px;line-height:1;letter-spacing:0.5px;color:#000;">8</div>
<div class="a" style="left:412px;width:75px;text-align:right;top:697.79px;font-size:11px;line-height:1;letter-spacing:0.5px;color:#000;">0</div>
<div class="a" style="left:489px;width:56px;text-align:right;top:697.79px;font-size:11px;line-height:1;letter-spacing:0.5px;color:#000;">0</div>
<div class="a" style="left:547px;width:90px;text-align:right;top:697.79px;font-size:11px;line-height:1;letter-spacing:0.5px;color:#000;">0</div>
<div class="a" style="left:639px;width:55px;text-align:right;top:697.79px;font-size:11px;line-height:1;letter-spacing:0.5px;color:#000;">0</div>
<div class="a" style="left:696px;width:90px;text-align:right;top:697.79px;font-size:11px;line-height:1;letter-spacing:0.5px;color:#000;">8</div>
<div class="a" style="left:788px;width:56px;text-align:right;top:697.79px;font-size:11px;line-height:1;letter-spacing:0.5px;color:#000;">0.0%</div>
<div class="a" style="left:37px;top:715.79px;font-size:11px;line-height:1;letter-spacing:0.5px;color:#000;">Clause 4: Context</div>
<div class="a" style="left:254px;width:156px;text-align:right;top:715.79px;font-size:11px;line-height:1;letter-spacing:0.5px;color:#000;">19</div>
<div class="a" style="left:412px;width:75px;text-align:right;top:715.79px;font-size:11px;line-height:1;letter-spacing:0.5px;color:#000;">0</div>
<div class="a" style="left:489px;width:56px;text-align:right;top:715.79px;font-size:11px;line-height:1;letter-spacing:0.5px;color:#000;">0</div>
<div class="a" style="left:547px;width:90px;text-align:right;top:715.79px;font-size:11px;line-height:1;letter-spacing:0.5px;color:#000;">0</div>
<div class="a" style="left:639px;width:55px;text-align:right;top:715.79px;font-size:11px;line-height:1;letter-spacing:0.5px;color:#000;">0</div>
<div class="a" style="left:696px;width:90px;text-align:right;top:715.79px;font-size:11px;line-height:1;letter-spacing:0.5px;color:#000;">19</div>
<div class="a" style="left:788px;width:56px;text-align:right;top:715.79px;font-size:11px;line-height:1;letter-spacing:0.5px;color:#000;">0.0%</div>
<div class="a" style="left:37px;top:733.79px;font-size:11px;line-height:1;letter-spacing:0.5px;color:#000;">Clause 5: Leadership</div>
<div class="a" style="left:254px;width:156px;text-align:right;top:733.79px;font-size:11px;line-height:1;letter-spacing:0.5px;color:#000;">16</div>
<div class="a" style="left:412px;width:75px;text-align:right;top:733.79px;font-size:11px;line-height:1;letter-spacing:0.5px;color:#000;">0</div>
<div class="a" style="left:489px;width:56px;text-align:right;top:733.79px;font-size:11px;line-height:1;letter-spacing:0.5px;color:#000;">0</div>
<div class="a" style="left:547px;width:90px;text-align:right;top:733.79px;font-size:11px;line-height:1;letter-spacing:0.5px;color:#000;">0</div>
<div class="a" style="left:639px;width:55px;text-align:right;top:733.79px;font-size:11px;line-height:1;letter-spacing:0.5px;color:#000;">0</div>
<div class="a" style="left:696px;width:90px;text-align:right;top:733.79px;font-size:11px;line-height:1;letter-spacing:0.5px;color:#000;">16</div>
<div class="a" style="left:788px;width:56px;text-align:right;top:733.79px;font-size:11px;line-height:1;letter-spacing:0.5px;color:#000;">0.0%</div>
<div class="a" style="left:37px;top:751.79px;font-size:11px;line-height:1;letter-spacing:0.5px;color:#000;">Clause 6: Planning</div>
<div class="a" style="left:254px;width:156px;text-align:right;top:751.79px;font-size:11px;line-height:1;letter-spacing:0.5px;color:#000;">29</div>
<div class="a" style="left:412px;width:75px;text-align:right;top:751.79px;font-size:11px;line-height:1;letter-spacing:0.5px;color:#000;">0</div>
<div class="a" style="left:489px;width:56px;text-align:right;top:751.79px;font-size:11px;line-height:1;letter-spacing:0.5px;color:#000;">0</div>
<div class="a" style="left:547px;width:90px;text-align:right;top:751.79px;font-size:11px;line-height:1;letter-spacing:0.5px;color:#000;">0</div>
<div class="a" style="left:639px;width:55px;text-align:right;top:751.79px;font-size:11px;line-height:1;letter-spacing:0.5px;color:#000;">0</div>
<div class="a" style="left:696px;width:90px;text-align:right;top:751.79px;font-size:11px;line-height:1;letter-spacing:0.5px;color:#000;">29</div>
<div class="a" style="left:788px;width:56px;text-align:right;top:751.79px;font-size:11px;line-height:1;letter-spacing:0.5px;color:#000;">0.0%</div>
<div class="a" style="left:37px;top:769.79px;font-size:11px;line-height:1;letter-spacing:0.5px;color:#000;">Clause 7: Support</div>
<div class="a" style="left:254px;width:156px;text-align:right;top:769.79px;font-size:11px;line-height:1;letter-spacing:0.5px;color:#000;">18</div>
<div class="a" style="left:412px;width:75px;text-align:right;top:769.79px;font-size:11px;line-height:1;letter-spacing:0.5px;color:#000;">0</div>
<div class="a" style="left:489px;width:56px;text-align:right;top:769.79px;font-size:11px;line-height:1;letter-spacing:0.5px;color:#000;">0</div>
<div class="a" style="left:547px;width:90px;text-align:right;top:769.79px;font-size:11px;line-height:1;letter-spacing:0.5px;color:#000;">0</div>
<div class="a" style="left:639px;width:55px;text-align:right;top:769.79px;font-size:11px;line-height:1;letter-spacing:0.5px;color:#000;">0</div>
<div class="a" style="left:696px;width:90px;text-align:right;top:769.79px;font-size:11px;line-height:1;letter-spacing:0.5px;color:#000;">18</div>
<div class="a" style="left:788px;width:56px;text-align:right;top:769.79px;font-size:11px;line-height:1;letter-spacing:0.5px;color:#000;">0.0%</div>
<div class="a" style="left:37px;top:787.79px;font-size:11px;line-height:1;letter-spacing:0.5px;color:#000;">Clause 8: Operation</div>
<div class="a" style="left:254px;width:156px;text-align:right;top:787.79px;font-size:11px;line-height:1;letter-spacing:0.5px;color:#000;">19</div>
<div class="a" style="left:412px;width:75px;text-align:right;top:787.79px;font-size:11px;line-height:1;letter-spacing:0.5px;color:#000;">0</div>
<div class="a" style="left:489px;width:56px;text-align:right;top:787.79px;font-size:11px;line-height:1;letter-spacing:0.5px;color:#000;">0</div>
<div class="a" style="left:547px;width:90px;text-align:right;top:787.79px;font-size:11px;line-height:1;letter-spacing:0.5px;color:#000;">0</div>
<div class="a" style="left:639px;width:55px;text-align:right;top:787.79px;font-size:11px;line-height:1;letter-spacing:0.5px;color:#000;">0</div>
<div class="a" style="left:696px;width:90px;text-align:right;top:787.79px;font-size:11px;line-height:1;letter-spacing:0.5px;color:#000;">19</div>
<div class="a" style="left:788px;width:56px;text-align:right;top:787.79px;font-size:11px;line-height:1;letter-spacing:0.5px;color:#000;">0.0%</div>
<div class="a" style="left:37px;top:805.79px;font-size:11px;line-height:1;letter-spacing:0.5px;color:#000;">Clause 9: Performance</div>
<div class="a" style="left:254px;width:156px;text-align:right;top:805.79px;font-size:11px;line-height:1;letter-spacing:0.5px;color:#000;">13</div>
<div class="a" style="left:412px;width:75px;text-align:right;top:805.79px;font-size:11px;line-height:1;letter-spacing:0.5px;color:#000;">0</div>
<div class="a" style="left:489px;width:56px;text-align:right;top:805.79px;font-size:11px;line-height:1;letter-spacing:0.5px;color:#000;">0</div>
<div class="a" style="left:547px;width:90px;text-align:right;top:805.79px;font-size:11px;line-height:1;letter-spacing:0.5px;color:#000;">0</div>
<div class="a" style="left:639px;width:55px;text-align:right;top:805.79px;font-size:11px;line-height:1;letter-spacing:0.5px;color:#000;">0</div>
<div class="a" style="left:696px;width:90px;text-align:right;top:805.79px;font-size:11px;line-height:1;letter-spacing:0.5px;color:#000;">13</div>
<div class="a" style="left:788px;width:56px;text-align:right;top:805.79px;font-size:11px;line-height:1;letter-spacing:0.5px;color:#000;">0.0%</div>
<div class="a" style="left:37px;top:823.79px;font-size:11px;line-height:1;letter-spacing:0.5px;color:#000;">Clause 10: Improvement</div>
<div class="a" style="left:254px;width:156px;text-align:right;top:823.79px;font-size:11px;line-height:1;letter-spacing:0.5px;color:#000;">15</div>
<div class="a" style="left:412px;width:75px;text-align:right;top:823.79px;font-size:11px;line-height:1;letter-spacing:0.5px;color:#000;">0</div>
<div class="a" style="left:489px;width:56px;text-align:right;top:823.79px;font-size:11px;line-height:1;letter-spacing:0.5px;color:#000;">0</div>
<div class="a" style="left:547px;width:90px;text-align:right;top:823.79px;font-size:11px;line-height:1;letter-spacing:0.5px;color:#000;">0</div>
<div class="a" style="left:639px;width:55px;text-align:right;top:823.79px;font-size:11px;line-height:1;letter-spacing:0.5px;color:#000;">0</div>
<div class="a" style="left:696px;width:90px;text-align:right;top:823.79px;font-size:11px;line-height:1;letter-spacing:0.5px;color:#000;">15</div>
<div class="a" style="left:788px;width:56px;text-align:right;top:823.79px;font-size:11px;line-height:1;letter-spacing:0.5px;color:#000;">0.0%</div>
<div class="a" style="left:37px;top:841.79px;font-size:11px;line-height:1;letter-spacing:0.5px;color:#000;">Annex A: Controls</div>
<div class="a" style="left:254px;width:156px;text-align:right;top:841.79px;font-size:11px;line-height:1;letter-spacing:0.5px;color:#000;">27</div>
<div class="a" style="left:412px;width:75px;text-align:right;top:841.79px;font-size:11px;line-height:1;letter-spacing:0.5px;color:#000;">0</div>
<div class="a" style="left:489px;width:56px;text-align:right;top:841.79px;font-size:11px;line-height:1;letter-spacing:0.5px;color:#000;">0</div>
<div class="a" style="left:547px;width:90px;text-align:right;top:841.79px;font-size:11px;line-height:1;letter-spacing:0.5px;color:#000;">0</div>
<div class="a" style="left:639px;width:55px;text-align:right;top:841.79px;font-size:11px;line-height:1;letter-spacing:0.5px;color:#000;">0</div>
<div class="a" style="left:696px;width:90px;text-align:right;top:841.79px;font-size:11px;line-height:1;letter-spacing:0.5px;color:#000;">27</div>
<div class="a" style="left:788px;width:56px;text-align:right;top:841.79px;font-size:11px;line-height:1;letter-spacing:0.5px;color:#000;">0.0%</div>
<div class="a" style="left:34px;top:220px;width:379px;height:26px;border:1px solid #1e6e45;box-shadow:inset 0 0 0 0.6px #1e6e45"></div>
<div class="a" style="left:409px;top:243px;width:6px;height:6px;background:#1e6e45;border:1px solid #fff"></div>
<div class="a" style="left:0;top:851px;width:959px;height:10px;background:#e6e6e6"></div>
<div class="a" style="left:13px;top:853px;width:644px;height:6px;border-radius:3px;background:#8a8a8a"></div>
<svg class="a" style="left:1px;top:852px" width="6" height="8" viewBox="0 0 6 8"><path d="M5 0 L5 8 L0 4 Z" fill="#6b6b6b"/></svg>
<div class="a" style="left:0;top:861px;width:959px;height:3px;background:#f9f9f9"></div>
<div class="a" style="left:0;top:864px;width:959px;height:26px;background:#f5f5f5"></div>
<div class="a" style="left:0;top:890px;width:959px;height:1px;background:#e0e0e0"></div>
<div class="a" style="left:0;top:891px;width:959px;height:20px;background:#fff"></div>
<svg class="a" style="left:8px;top:870px" width="6" height="11" viewBox="0 0 6 11"><path d="M5 1 L1 5.5 L5 10" fill="none" stroke="#c2c2c2" stroke-width="1"/></svg>
<svg class="a" style="left:36px;top:870px" width="6" height="11" viewBox="0 0 6 11"><path d="M1 1 L5 5.5 L1 10" fill="none" stroke="#c2c2c2" stroke-width="1"/></svg>
<svg class="a" style="left:62px;top:870px" width="12" height="10" viewBox="0 0 12 10"><path d="M0 1.5 H12 M0 5 H12 M0 8.5 H12" stroke="#424242" stroke-width="1.2"/></svg>
<div class="a" style="left:90px;top:869px;font-weight:bold;color:#242424;font-size:12px">Overview &amp; Summary</div>
<div class="a" style="left:232px;top:869px;color:#424242;font-size:12.2px">Assessment Checklist</div>
<div class="a" style="left:369px;top:869px;color:#424242;font-size:12.2px">Gap Analysis</div>
<div class="a" style="left:458px;top:869px;color:#424242;font-size:12.2px">Evidence Repository</div>
<div class="a" style="left:589px;top:869px;color:#424242;font-size:12.2px">Disclaimer</div>
<div class="a" style="left:90px;top:888px;width:125px;height:2px;background:#107c41"></div>
<svg class="a" style="left:664px;top:869px" width="11" height="11" viewBox="0 0 11 11"><path d="M5.5 0 V11 M0 5.5 H11" stroke="#424242" stroke-width="1.1"/></svg>
<div class="a" style="left:14px;top:896px;font-size:10.6px;color:#5a5a5a">Workbook Statistics</div>
</body></html>
